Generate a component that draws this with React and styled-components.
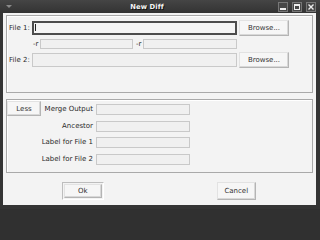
import React from 'react';
import styled, { createGlobalStyle } from 'styled-components';

const GlobalStyle = createGlobalStyle`
  html, body {
    margin: 0;
    padding: 0;
    background: #303030;
  }
  body {
    font-family: "DejaVu Sans", "Liberation Sans", sans-serif;
    font-size: 7px;
    color: #2b2b2b;
  }
`;

const Window = styled.div`
  width: 320px;
  height: 209px;
  box-sizing: border-box;
  display: flex;
  flex-direction: column;
  background: #343434;
  padding: 0 4px 4px 3px;
`;

const TitleBar = styled.div`
  height: 13px;
  display: flex;
  align-items: center;
  background: linear-gradient(#454545, #333333);
  margin: 0 -4px 0 -3px;
  padding: 0 4px 0 6px;
`;

const MenuArrow = styled.svg`
  width: 6px;
  height: 4px;
  flex: none;
`;

const Title = styled.div`
  flex: 1;
  text-align: center;
  color: #f4f4f4;
  font-weight: bold;
  font-size: 6.8px;
  letter-spacing: 0.1px;
  text-shadow: 1px 1px 0 #111;
  padding-left: 4px;
`;

const WinButtons = styled.div`
  display: flex;
  gap: 4px;
`;

const WinButton = styled.div`
  width: 10px;
  height: 10px;
  box-sizing: border-box;
  border: 1px solid #777777;
  background: #474747;
  display: flex;
  align-items: center;
  justify-content: center;
`;

const Body = styled.div`
  flex: 1;
  background: #f3f3f3;
  padding: 2px 3px 0 3px;
  display: flex;
  flex-direction: column;
`;

const Group = styled.div`
  box-sizing: border-box;
  height: ${p => p.h}px;
  border: 1px solid #a9a9a9;
  box-shadow: inset 1px 1px 0 #ffffff;
  margin-bottom: ${p => p.mb || 0}px;
`;

const FilesGroup = styled(Group)`
  padding: 4px 0 0 2px;
  display: flex;
  flex-direction: column;
`;

const FileRow = styled.div`
  display: flex;
  align-items: center;
  height: 16px;
`;

const RevRow = styled.div`
  display: flex;
  align-items: center;
  height: 12px;
  margin: 2px 0 2px 24px;
`;

const Label = styled.span`
  width: ${p => p.w}px;
  flex: none;
  white-space: nowrap;
`;

const Entry = styled.div`
  box-sizing: border-box;
  width: ${p => p.w}px;
  height: ${p => p.h}px;
  flex: none;
  background: #f0f0f0;
  border: 1px solid #c9c9c9;
  margin-right: ${p => p.mr || 0}px;
  position: relative;
`;

const FocusEntry = styled(Entry)`
  border: 2px solid #4d4d4d;
  background: #f5f5f5;
  &::after {
    content: '';
    position: absolute;
    left: 1px;
    top: 1px;
    width: 1px;
    height: 7px;
    background: #222;
  }
`;

const Button = styled.div`
  box-sizing: border-box;
  width: ${p => p.w}px;
  height: ${p => p.h}px;
  flex: none;
  display: flex;
  align-items: center;
  justify-content: center;
  background: #f6f6f6;
  border: 1px solid;
  border-color: #e2e2e2 #b4b4b4 #b4b4b4 #e2e2e2;
  box-shadow: inset -1px -1px 0 #d8d8d8;
  color: #333;
`;

const DefaultFrame = styled.div`
  box-sizing: border-box;
  width: 42px;
  height: 18px;
  padding: 1px;
  display: flex;
  border: 1px solid;
  border-color: #bdbdbd #ffffff #ffffff #bdbdbd;
`;

const OptionsGroup = styled(Group)`
  padding: 1px 0 0 0;
  display: flex;
  align-items: flex-start;
`;

const Fields = styled.div`
  display: grid;
  grid-template-columns: 52px 94px;
  grid-auto-rows: 11px;
  column-gap: 3px;
  row-gap: 5.67px;
  padding-top: 3px;
`;

const FieldLabel = styled.span`
  text-align: right;
  white-space: nowrap;
  line-height: 11px;
`;

const Actions = styled.div`
  display: grid;
  grid-template-columns: 1fr 1fr;
  justify-items: center;
  margin-top: 9px;
`;

const files = [
  { label: 'File 1:', focus: true },
  { label: 'File 2:' },
];

const options = ['Merge Output', 'Ancestor', 'Label for File 1', 'Label for File 2'];

const App = () => {
  return (
    <>
      <GlobalStyle />
      <Window>
        <TitleBar>
          <MenuArrow viewBox="0 0 6 4">
            <path d="M0 0 L6 0 L3 3 Z" fill="#8a8a8a" />
          </MenuArrow>
          <Title>New Diff</Title>
          <WinButtons>
            <WinButton>
              <svg width="6" height="6" viewBox="0 0 6 6">
                <rect x="0" y="4" width="6" height="2" fill="#eeeeee" />
              </svg>
            </WinButton>
            <WinButton>
              <svg width="6" height="6" viewBox="0 0 6 6">
                <rect x="0.5" y="0.5" width="5" height="5" fill="none" stroke="#eeeeee" />
                <rect x="0" y="0" width="6" height="2" fill="#eeeeee" />
              </svg>
            </WinButton>
            <WinButton>
              <svg width="6" height="6" viewBox="0 0 6 6">
                <path d="M0.5 0.5 L5.5 5.5 M5.5 0.5 L0.5 5.5" stroke="#eeeeee" strokeWidth="1.4" />
              </svg>
            </WinButton>
          </WinButtons>
        </TitleBar>
        <Body>
          <FilesGroup h={78} mb={6}>
            <FileRow>
              <Label w={23}>{files[0].label}</Label>
              <FocusEntry w={205} h={14} mr={2} />
              <Button w={50} h={16}>Browse...</Button>
            </FileRow>
            <RevRow>
              <Label w={7}>-r</Label>
              <Entry w={93} h={10} mr={3} />
              <Label w={7}>-r</Label>
              <Entry w={94} h={10} />
            </RevRow>
            <FileRow>
              <Label w={23}>{files[1].label}</Label>
              <Entry w={205} h={14} mr={2} />
              <Button w={50} h={16}>Browse...</Button>
            </FileRow>
          </FilesGroup>
          <OptionsGroup h={74}>
            <Button w={34} h={15}>Less</Button>
            <Fields>
              {options.map(o => (
                <React.Fragment key={o}>
                  <FieldLabel>{o}</FieldLabel>
                  <Entry w={94} h={11} />
                </React.Fragment>
              ))}
            </Fields>
          </OptionsGroup>
          <Actions>
            <DefaultFrame>
              <Button w={38} h={14}>Ok</Button>
            </DefaultFrame>
            <Button w={39} h={18}>Cancel</Button>
          </Actions>
        </Body>
      </Window>
    </>
  );
};

export default App;
